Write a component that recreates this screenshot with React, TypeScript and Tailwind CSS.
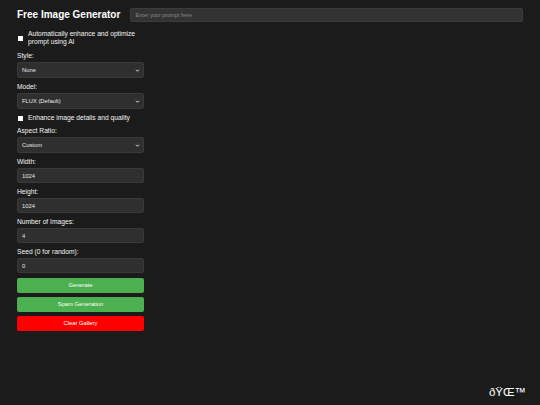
import React from 'react';

const fieldClass =
  "block w-full rounded-[2px] bg-[#2f2f2f] text-[#e6e6e6] text-[5.8px] px-[4px] border border-[#3a3a3a] outline-none";

const Label: React.FC<{ text: string }> = ({ text }) => (
  <label className="block text-[6.7px] leading-[8px] text-[#f4f4f4] mb-[2px]">{text}</label>
);

const Chevron: React.FC = () => (
  <svg className="absolute right-[4px] top-[5.5px] w-[5px] h-[5px]" viewBox="0 0 10 10">
    <path d="M2 3.5 L5 6.5 L8 3.5" fill="none" stroke="#e6e6e6" strokeWidth="2" />
  </svg>
);

const SelectField: React.FC<{ label: string; value: string }> = ({ label, value }) => (
  <div className="mb-[5px]">
    <Label text={label} />
    <div className="relative">
      <div className={fieldClass + " h-[16px] flex items-center"}>{value}</div>
      <Chevron />
    </div>
  </div>
);

const InputField: React.FC<{ label: string; value: string }> = ({ label, value }) => (
  <div className="mb-[5px]">
    <Label text={label} />
    <input className={fieldClass + " h-[15px]"} defaultValue={value} readOnly />
  </div>
);

const Check: React.FC<{ children: React.ReactNode; className?: string }> = ({ children, className }) => (
  <div className={"flex items-center gap-[5px] pl-[1px] " + (className ?? "")}>
    <span className="w-[5px] h-[5px] bg-white shrink-0" />
    <span className="text-[6.7px] leading-[8px] text-[#f4f4f4]">{children}</span>
  </div>
);

const Button: React.FC<{ text: string; color: string }> = ({ text, color }) => (
  <button
    className={
      "w-full h-[15px] rounded-[2px] text-[5.8px] text-white flex items-center justify-center mb-[4px] " + color
    }
  >
    {text}
  </button>
);

const App: React.FC = () => {
  return (
    <div
      className="w-[540px] h-[405px] bg-[#1b1b1b] text-white relative overflow-hidden"
      style={{ fontFamily: '"Liberation Sans", Arial, sans-serif' }}
    >
      <div className="pl-[17px] pr-[17px] pt-[8px]">
        <div className="flex items-center gap-[10px] h-[14px]">
          <h1 className="text-[10px] font-bold leading-none whitespace-nowrap">Free Image Generator</h1>
          <input
            className="flex-1 h-[14px] rounded-[2px] bg-[#333333] border border-[#3c3c3c] text-[5.5px] px-[4px] text-white placeholder:text-[#8a8a8a] outline-none"
            placeholder="Enter your prompt here"
            readOnly
          />
        </div>

        <div className="w-[127px] mt-[8px]">
          <Check className="mb-[6px]">
            Automatically enhance and optimize
            <br />
            prompt using AI
          </Check>
          <SelectField label="Style:" value="None" />
          <SelectField label="Model:" value="FLUX (Default)" />
          <Check className="mt-[5px] mb-[5px]">Enhance image details and quality</Check>
          <SelectField label="Aspect Ratio:" value="Custom" />
          <InputField label="Width:" value="1024" />
          <InputField label="Height:" value="1024" />
          <InputField label="Number of Images:" value="4" />
          <InputField label="Seed (0 for random):" value="0" />
          <Button text="Generate" color="bg-[#4caf50]" />
          <Button text="Spam Generation" color="bg-[#4caf50]" />
          <Button text="Clear Gallery" color="bg-[#ff0000]" />
        </div>
      </div>

      <div className="absolute right-[14px] bottom-[7px] text-[11.5px] leading-none text-white">
        {"\u00f0\u0178\u0152\u2122"}
      </div>
    </div>
  );
};

export default App;
